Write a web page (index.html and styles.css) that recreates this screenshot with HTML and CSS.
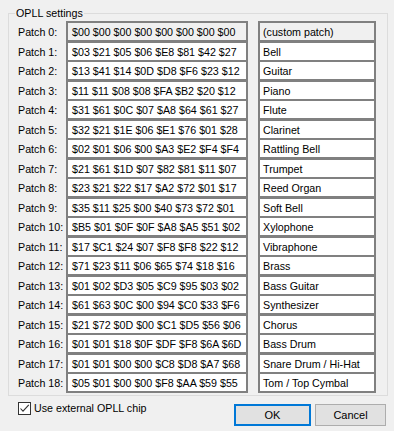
FILE: index.html
```html
<!DOCTYPE html>
<html lang="en">
<head>
<meta charset="UTF-8" />
<meta name="viewport" content="width=device-width, initial-scale=1" />
<title>OPLL settings</title>
<link rel="stylesheet" href="styles.css">
</head>
<body>

  <fieldset class="group">
    <legend>OPLL settings</legend>

    <div class="row first"><span class="label">Patch 0:</span><span class="hex">$00 $00 $00 $00 $00 $00 $00 $00</span><span class="name">(custom patch)</span></div>
    <div class="row"><span class="label">Patch 1:</span><span class="hex">$03 $21 $05 $06 $E8 $81 $42 $27</span><span class="name">Bell</span></div>
    <div class="row"><span class="label">Patch 2:</span><span class="hex">$13 $41 $14 $0D $D8 $F6 $23 $12</span><span class="name">Guitar</span></div>
    <div class="row"><span class="label">Patch 3:</span><span class="hex">$11 $11 $08 $08 $FA $B2 $20 $12</span><span class="name">Piano</span></div>
    <div class="row"><span class="label">Patch 4:</span><span class="hex">$31 $61 $0C $07 $A8 $64 $61 $27</span><span class="name">Flute</span></div>
    <div class="row"><span class="label">Patch 5:</span><span class="hex">$32 $21 $1E $06 $E1 $76 $01 $28</span><span class="name">Clarinet</span></div>
    <div class="row"><span class="label">Patch 6:</span><span class="hex">$02 $01 $06 $00 $A3 $E2 $F4 $F4</span><span class="name">Rattling Bell</span></div>
    <div class="row"><span class="label">Patch 7:</span><span class="hex">$21 $61 $1D $07 $82 $81 $11 $07</span><span class="name">Trumpet</span></div>
    <div class="row"><span class="label">Patch 8:</span><span class="hex">$23 $21 $22 $17 $A2 $72 $01 $17</span><span class="name">Reed Organ</span></div>
    <div class="row"><span class="label">Patch 9:</span><span class="hex">$35 $11 $25 $00 $40 $73 $72 $01</span><span class="name">Soft Bell</span></div>
    <div class="row"><span class="label">Patch 10:</span><span class="hex">$B5 $01 $0F $0F $A8 $A5 $51 $02</span><span class="name">Xylophone</span></div>
    <div class="row"><span class="label">Patch 11:</span><span class="hex">$17 $C1 $24 $07 $F8 $F8 $22 $12</span><span class="name">Vibraphone</span></div>
    <div class="row"><span class="label">Patch 12:</span><span class="hex">$71 $23 $11 $06 $65 $74 $18 $16</span><span class="name">Brass</span></div>
    <div class="row"><span class="label">Patch 13:</span><span class="hex">$01 $02 $D3 $05 $C9 $95 $03 $02</span><span class="name">Bass Guitar</span></div>
    <div class="row"><span class="label">Patch 14:</span><span class="hex">$61 $63 $0C $00 $94 $C0 $33 $F6</span><span class="name">Synthesizer</span></div>
    <div class="row"><span class="label">Patch 15:</span><span class="hex">$21 $72 $0D $00 $C1 $D5 $56 $06</span><span class="name">Chorus</span></div>
    <div class="row"><span class="label">Patch 16:</span><span class="hex">$01 $01 $18 $0F $DF $F8 $6A $6D</span><span class="name">Bass Drum</span></div>
    <div class="row"><span class="label">Patch 17:</span><span class="hex">$01 $01 $00 $00 $C8 $D8 $A7 $68</span><span class="name">Snare Drum / Hi-Hat</span></div>
    <div class="row"><span class="label">Patch 18:</span><span class="hex">$05 $01 $00 $00 $F8 $AA $59 $55</span><span class="name">Tom / Top Cymbal</span></div>
  </fieldset>

  <div class="footer">
    <label class="check">
      <span class="box">
        <svg width="11" height="11" viewBox="0 0 11 11"><path d="M1.5 5.5 L4 8.2 L9.8 1.8" fill="none" stroke="#333" stroke-width="1.1"/></svg>
      </span>
      <span>Use external OPLL chip</span>
    </label>
    <button class="btn ok">OK</button>
    <button class="btn">Cancel</button>
  </div>

</body>
</html>
```

FILE: styles.css
```css
 html, body {
   margin: 0;
 }
 body {
   width: 394px;
   height: 431px;
   box-sizing: border-box;
   padding: 6px 6px 0 8px;
   background: #f0f0f0;
   color: #000;
   font-family: "Liberation Sans", Arial, sans-serif;
   font-size: 10.7px;
   overflow: hidden;
 }
 .group {
   margin: 0;
   width: 380px;
   box-sizing: border-box;
   border: 1px solid #dcdcdc;
   padding: 1px 11px 3px 9px;
 }
 legend {
   padding: 0 1px;
   margin-left: -3px;
   line-height: 14px;
 }
 .row {
   display: flex;
   align-items: flex-start;
   height: 19.5px;
 }
 .label {
   width: 48px;
   padding-top: 2px;
   line-height: 19px;
 }
 .hex, .name {
   height: 21px;
   box-sizing: border-box;
   border: 2px solid #808080;
   background: #fff;
   line-height: 19px;
   white-space: nowrap;
 }
 .hex {
   width: 182px;
   padding-left: 4px;
 }
 .name {
   width: 118px;
   margin-left: 10px;
   padding-left: 3px;
 }
 .first .hex, .first .name {
   background: #f0f0f0;
 }
 .footer {
   display: flex;
   align-items: flex-start;
   margin-top: 8.5px;
   padding: 0 2px 0 10px;
 }
 .check {
   display: flex;
   align-items: center;
   gap: 3px;
   margin-top: -2px;
   line-height: 13px;
 }
 .box {
   width: 13px;
   height: 13px;
   box-sizing: border-box;
   border: 1px solid #333;
   background: #fff;
   display: flex;
 }
 .btn {
   width: 71px;
   height: 22px;
   margin-left: 4px;
   padding: 0;
   border: 1px solid #adadad;
   background: #e1e1e1;
   font-family: "Liberation Sans", Arial, sans-serif;
   font-size: 11px;
   color: #000;
 }
 .ok {
   width: 77px;
   margin-left: auto;
   border: 2px solid #0078d7;
 }
```
